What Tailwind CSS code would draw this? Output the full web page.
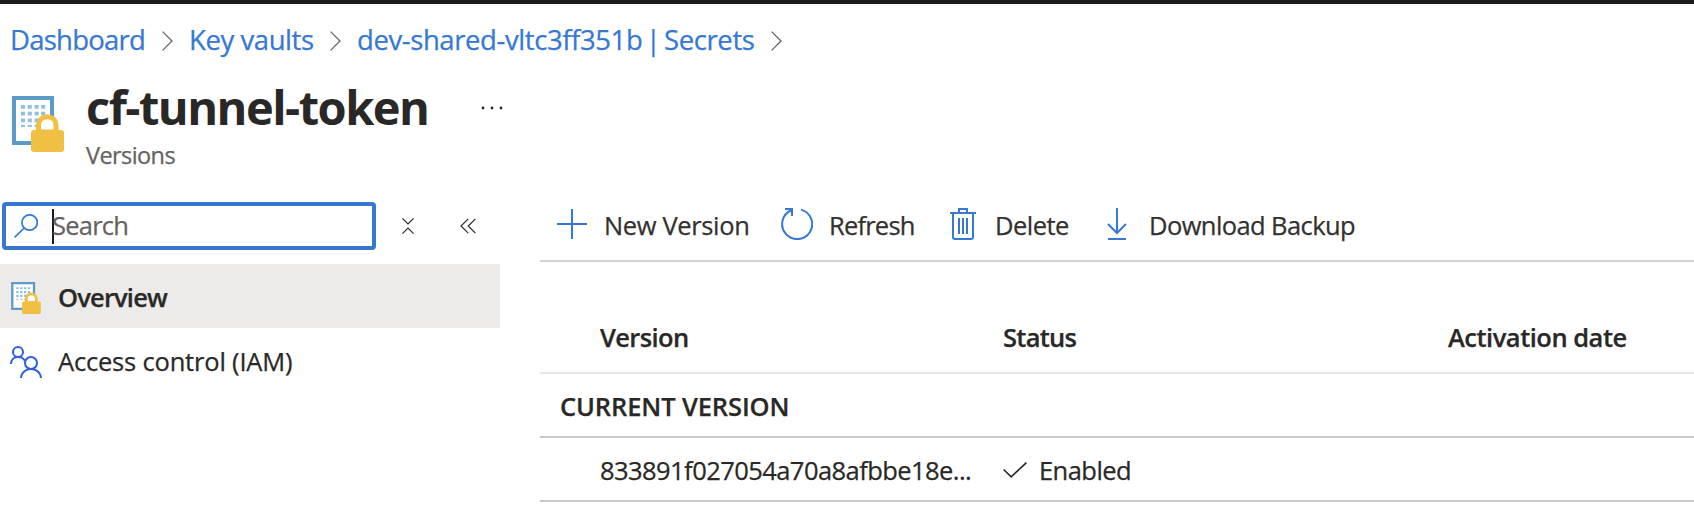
<!DOCTYPE html>
<html lang="en">
<head>
<meta charset="utf-8">
<title>cf-tunnel-token - Versions</title>
<script src="https://cdn.jsdelivr.net/npm/@tailwindcss/browser@4"></script>
</head>
<body class="h-[520px] overflow-hidden bg-white font-['Open_Sans',sans-serif] text-[25.5px] leading-[36px] text-[#292827] [-webkit-text-stroke:0.25px_currentColor]">
<svg class="hidden">
  <symbol id="vault" viewBox="0 0 52 56">
    <rect x="2" y="2" width="38" height="45" fill="#fff" stroke="#5a9bc8" stroke-width="4"/>
    <path d="M11 9v22M17.8 9v22M24.6 9v22M31.2 9v22" stroke="#8dc1df" stroke-width="4" stroke-dasharray="3.8 2.9"/>
    <path d="M26.500 36V29.500C26.500 17.800 44 17.800 44 29.500V36Z" fill="#fff" stroke="#f1bf43" stroke-width="5"/>
    <rect x="19" y="34" width="33" height="22" rx="3" fill="#f1bf43"/>
  </symbol>
  <symbol id="crumb" viewBox="0 0 11 20">
    <path d="M.6.6 10 10 .6 19.400" fill="none" stroke="#646362" stroke-width="1.300"/>
  </symbol>
</svg>

<div class="h-1 bg-[#1c1b1c]"></div>

<nav class="flex h-[71px] items-center whitespace-nowrap pl-[10px] text-[27.5px] text-[#3678d4]">
  <a class="w-[152px] tracking-[-0.76px]">Dashboard</a>
  <svg class="mr-4 mt-[3px] h-5 w-[11px] shrink-0"><use href="#crumb"/></svg>
  <a class="w-[141px] tracking-[-0.43px]">Key vaults</a>
  <svg class="mr-4 mt-[3px] h-5 w-[11px] shrink-0"><use href="#crumb"/></svg>
  <a class="w-[414px] tracking-[-0.41px] [word-spacing:-3.2px]">dev-shared-vltc3ff351b | Secrets</a>
  <svg class="mt-[3px] h-5 w-[11px] shrink-0"><use href="#crumb"/></svg>
</nav>

<header class="flex h-[113px] pl-3 pt-px">
  <svg class="mt-5 h-14 w-[52px]"><use href="#vault"/></svg>
  <div class="ml-[21px] w-[396px]">
    <h1 class="ml-px mt-px whitespace-nowrap text-[47px] font-bold leading-[60px] tracking-[-1.51px] [-webkit-text-stroke:0]">cf-tunnel-token</h1>
    <p class="ml-px mt-[2px] text-[23.5px] leading-[32px] tracking-[-0.58px] text-[#646362]">Versions</p>
  </div>
  <svg class="mt-[30px] h-1 w-[22px]" viewBox="0 0 22 4" fill="#292827"><circle cx="2" cy="2" r="1.400"/><circle cx="11" cy="2" r="1.400"/><circle cx="20" cy="2" r="1.400"/></svg>
</header>

<div class="flex">
  <aside class="w-[500px] shrink-0 pt-[14px]">
    <div class="flex h-12 items-center pl-[2px]">
      <div class="flex h-12 w-[374px] items-center rounded-[4px] border-4 border-[#3678d0] pl-2">
        <svg class="h-6 w-6" viewBox="0 0 24 24" fill="none" stroke="#3678d4" stroke-width="1.700"><circle cx="15.600" cy="8.500" r="7.700"/><path d="M10.200 14 .6 23.400"/></svg>
        <div class="ml-[14px] h-[35px] w-[2px] bg-[#1c1b1c]"></div>
        <span class="-ml-[2px] -mt-[2px] tracking-[-0.76px] text-[#646362]">Search</span>
      </div>
      <svg class="ml-[26px] h-4 w-3" viewBox="0 0 12 16" fill="none" stroke="#292827" stroke-width="1.200"><path d="M.4.4 6 6 11.600.4M.4 15.600 6 10l5.600 5.600"/></svg>
      <svg class="ml-[46px] h-4 w-4" viewBox="0 0 16 16" fill="none" stroke="#292827" stroke-width="1.200"><path d="M8.200.8 1 8l7.200 7.200M15.400.8 8.200 8l7.200 7.200"/></svg>
    </div>
    <div class="mt-[14px] flex h-16 items-center bg-[#ecebe9] pl-[11px]">
      <svg class="mt-[4px] h-8 w-[30px]"><use href="#vault"/></svg>
      <span class="ml-[17px] mt-[2px] font-semibold tracking-[-0.83px]">Overview</span>
    </div>
    <div class="flex h-16 items-center pl-[10px]">
      <svg class="mt-[4px] h-8 w-8" viewBox="0 0 32 32" fill="none" stroke="#2d5fd6" stroke-width="2"><circle cx="8" cy="6" r="5"/><path d="M1 18C1 9.500 13 9 15 15.500"/><circle cx="21" cy="17" r="6"/><path d="M11 32C12 20 30 20 31 32"/></svg>
      <span class="ml-4 mt-[2px] tracking-[-0.19px]">Access control (IAM)</span>
    </div>
  </aside>

  <main class="ml-10 min-w-0 grow">
    <div class="flex h-[74px] items-center whitespace-nowrap border-b-2 border-[#d2d1d0] pl-[17px] text-[#323130]">
      <div class="flex w-[224px] items-center">
        <svg class="mr-[17px] h-[30px] w-[30px]" viewBox="0 0 30 30" stroke="#3678d4" stroke-width="2"><path d="M15 0v30M0 15h30"/></svg>
        <span class="mt-[2px] tracking-[-0.36px]">New Version</span>
      </div>
      <div class="flex w-[169px] items-center">
        <svg class="mr-4 h-8 w-8" viewBox="0 0 32 32" fill="none" stroke="#3678d4" stroke-width="2"><path d="M20 1.600A15 15 0 1 1 10.500 2.200M4 1h7v7"/></svg>
        <span class="mt-[2px] tracking-[-0.8px]">Refresh</span>
      </div>
      <div class="flex w-[157px] items-center">
        <svg class="mr-[19px] h-8 w-[26px]" viewBox="0 0 26 32" fill="none" stroke="#3678d4" stroke-width="2"><path d="M0 5h26M9 5V1h8v4M3 5v24q0 2 2 2h16q2 0 2-2V5M9 10v16M13 10v16M17 10v16"/></svg>
        <span class="mt-[2px] tracking-[-0.53px]">Delete</span>
      </div>
      <div class="flex items-center">
        <svg class="mr-[22px] h-8 w-5" viewBox="0 0 20 32" fill="none" stroke="#3678d4" stroke-width="2"><path d="M10 0v25M1 16l9 9 9-9M1 31h18"/></svg>
        <span class="mt-[2px] tracking-[-0.59px]">Download Backup</span>
      </div>
    </div>

    <div class="grid h-[112px] grid-cols-[403px_445px_1fr] items-center whitespace-nowrap border-b-2 border-[#eae9e8] pl-[60px] pt-10 font-semibold">
      <span class="tracking-[-0.61px]">Version</span>
      <span class="tracking-[-0.74px]">Status</span>
      <span class="tracking-[-0.5px]">Activation date</span>
    </div>
    <div class="flex h-16 items-center border-b-2 border-[#c8c8c8] pl-5 pt-[2px] font-semibold tracking-[-0.12px]">CURRENT VERSION</div>
    <div class="grid h-16 grid-cols-[403px_445px_1fr] items-center whitespace-nowrap border-b-2 border-[#c8c8c8] pl-[60px] pt-[2px]">
      <span class="tracking-[-0.56px]">833891f027054a70a8afbbe18e...</span>
      <span class="flex items-center tracking-[-0.55px]">
        <svg class="mr-[12px] h-4 w-6" viewBox="0 0 24 16" fill="none" stroke="#292827" stroke-width="1.600"><path d="M.6 7.500 8.200 14.800 23.400.6"/></svg>
        Enabled
      </span>
    </div>
  </main>
</div>
</body>
</html>
